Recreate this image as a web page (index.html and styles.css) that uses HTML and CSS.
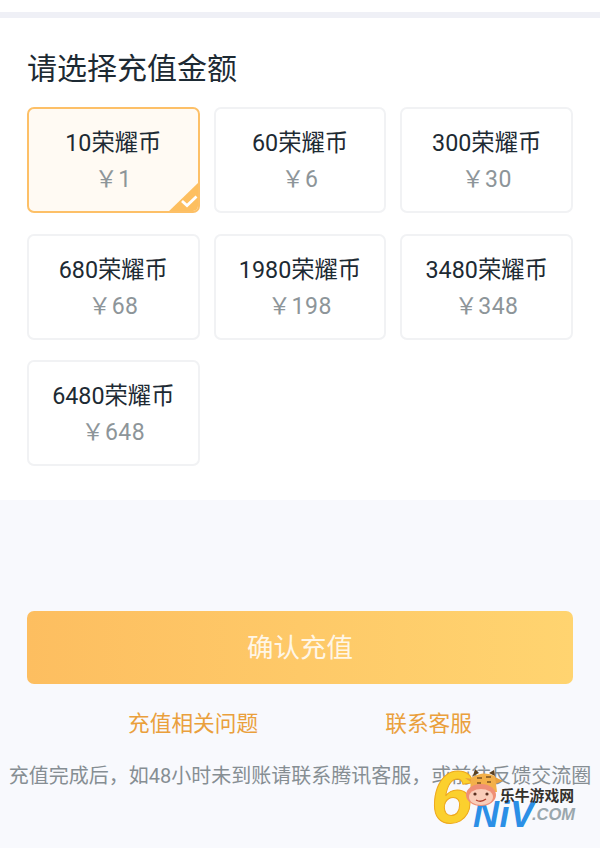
FILE: index.html
```html
<!DOCTYPE html>
<html lang="zh-CN">
<head>
<meta charset="utf-8">
<title>充值</title>
<link rel="stylesheet" href="styles.css">
</head>
<body>
<div class="page">
  <div class="strip"></div>
  <section class="panel">
    <h1 class="title">请选择充值金额</h1>
    <div class="grid">
      <div class="card selected">
        <div class="coins">10荣耀币</div>
        <div class="price">￥1</div>
        <svg class="tick" width="33" height="32" viewBox="0 0 33 32"><path d="M33 0V26a6 6 0 0 1-6 6H0Z" fill="#fdbf60"/><path d="M15 20l5 4.500 9.500-9" fill="none" stroke="#fff" stroke-width="2.800"/></svg>
      </div>
      <div class="card"><div class="coins">60荣耀币</div><div class="price">￥6</div></div>
      <div class="card"><div class="coins">300荣耀币</div><div class="price">￥30</div></div>
      <div class="card"><div class="coins">680荣耀币</div><div class="price">￥68</div></div>
      <div class="card"><div class="coins">1980荣耀币</div><div class="price">￥198</div></div>
      <div class="card"><div class="coins">3480荣耀币</div><div class="price">￥348</div></div>
      <div class="card"><div class="coins">6480荣耀币</div><div class="price">￥648</div></div>
    </div>
  </section>
  <section class="actions">
    <div class="confirm">确认充值</div>
    <div class="links">
      <span class="link">充值相关问题</span>
      <span class="link">联系客服</span>
    </div>
    <p class="note">充值完成后，如48小时未到账请联系腾讯客服，或前往反馈交流圈</p>
  </section>
  <div class="logo">
    <span class="logo-six">6</span>
    <span class="logo-niv">NiV</span>
    <span class="logo-com">.COM</span>
    <span class="logo-cn">乐牛游戏网</span>
    <svg class="logo-cow" width="38" height="38" viewBox="0 0 38 38">
      <path d="M8 7L10 0l4 4M24 4l5-3 1 6" fill="#5a4020"/>
      <path d="M0 9l8 1-1 4ZM30 8l8 4-8 3Z" fill="#e9a13c"/>
      <path d="M6 9Q18 1 30 7l2 16H5Z" fill="#f3b04a"/>
      <path d="M12 9h5M21 8h5M12 14h4M22 13h4" stroke="#7a5020" stroke-width="1.300"/>
      <ellipse cx="16" cy="26" rx="15" ry="11" fill="#ef8f76"/>
      <ellipse cx="16" cy="28" rx="12" ry="8" fill="#f9cdb9"/>
      <circle cx="10" cy="25" r="1.600" fill="#5a3020"/>
      <circle cx="22" cy="25" r="1.600" fill="#5a3020"/>
      <path d="M11 31q5 3 10-1" fill="none" stroke="#b04030" stroke-width="1.300"/>
    </svg>
  </div>
</div>
</body>
</html>
```

FILE: styles.css
```css
* { box-sizing: border-box; }
html, body { margin: 0; padding: 0; }
body {
  width: 600px;
  height: 848px;
  overflow: hidden;
  background: #f8f9fd;
  font-family: Roboto, "Noto Sans CJK SC", sans-serif;
}
.page { position: relative; width: 600px; height: 848px; }
.strip {
  height: 18px;
  background: #fff;
  border-bottom: 6px solid #eff0f6;
}
.panel {
  height: 482px;
  background: #fff;
  padding: 31px 27px 0;
}
.title {
  margin: 0 0 19px;
  height: 39px;
  font-size: 30px;
  line-height: 39px;
  font-weight: 400;
  color: #1d2a33;
}
.grid {
  display: grid;
  grid-template-columns: repeat(3, 1fr);
  grid-auto-rows: 106px;
  column-gap: 14px;
  row-gap: 20.500px;
}
.card {
  position: relative;
  display: flex;
  flex-direction: column;
  align-items: center;
  padding-top: 19px;
  background: #fff;
  border: 2px solid #f1f2f4;
  border-radius: 7px;
  overflow: hidden;
}
.card.selected {
  background: #fffaf3;
  border-color: #fdc067;
}
.coins {
  height: 30px;
  font-size: 23.300px;
  line-height: 30px;
  color: #1d2a33;
}
.price {
  margin-top: 7px;
  height: 30px;
  font-size: 23px;
  line-height: 30px;
  color: #8d9599;
  letter-spacing: 0.500px;
}
.tick { position: absolute; right: -2px; bottom: -2px; }
.actions {
  display: flex;
  flex-direction: column;
  padding-top: 111px;
}
.confirm {
  margin: 0 27px;
  height: 73px;
  border-radius: 7px;
  background: linear-gradient(90deg, #fdbe60, #ffd470);
  font-size: 26.500px;
  line-height: 73px;
  text-align: center;
  color: #fff6e6;
}
.links {
  display: flex;
  justify-content: space-between;
  padding: 0 128px;
  margin-top: 25px;
  height: 30px;
}
.link {
  font-size: 21.700px;
  line-height: 30px;
  color: #eaa03c;
}
.note {
  margin: 23px 0 0;
  height: 28px;
  font-size: 20px;
  line-height: 28px;
  text-align: center;
  white-space: nowrap;
  color: #868e93;
}
.logo {
  position: absolute;
  left: 430px;
  top: 768px;
  width: 150px;
  height: 66px;
}
.logo-six {
  position: absolute;
  left: 1px;
  top: -12px;
  font-family: "Liberation Sans", sans-serif;
  font-weight: 700;
  font-style: italic;
  font-size: 74px;
  line-height: 84px;
  color: #fbd02e;
  -webkit-text-stroke: 1px #eea81c;
}
.logo-niv {
  position: absolute;
  left: 43px;
  top: 27px;
  font-family: "Liberation Sans", sans-serif;
  font-weight: 700;
  font-style: italic;
  font-size: 36px;
  line-height: 40px;
  letter-spacing: 0.500px;
  color: #2b8fe6;
}
.logo-com {
  position: absolute;
  left: 102px;
  top: 34px;
  font-family: "Liberation Sans", sans-serif;
  font-weight: 700;
  font-style: italic;
  font-size: 16.500px;
  line-height: 24px;
  color: #9aa7ad;
}
.logo-cn {
  position: absolute;
  left: 70px;
  top: 18px;
  font-family: "Noto Sans CJK SC", sans-serif;
  font-weight: 700;
  font-size: 14.800px;
  line-height: 18px;
  white-space: nowrap;
  color: #33302c;
}
.logo-cow { position: absolute; left: 35px; top: 1px; }
```
